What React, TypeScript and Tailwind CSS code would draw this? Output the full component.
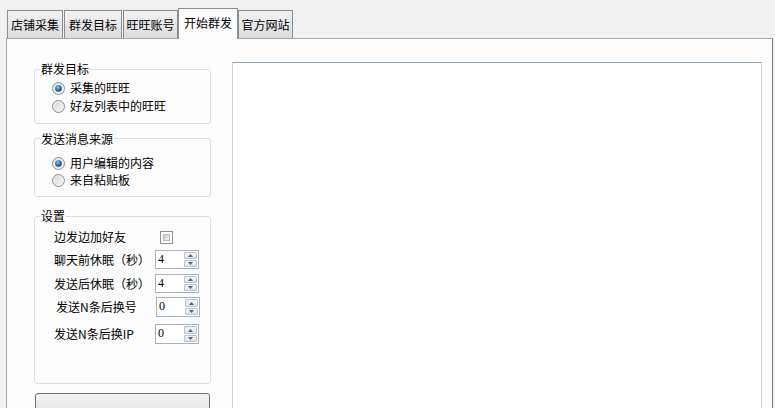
import React from "react";

const FONT = { fontFamily: '"Noto Sans CJK SC", "Noto Sans", sans-serif' };

function Radio({ checked }: { checked?: boolean }) {
  return (
    <svg width="13" height="13" viewBox="0 0 13 13" className="shrink-0">
      <defs>
        <linearGradient id="rbg" x1="0" y1="0" x2="1" y2="1">
          <stop offset="0" stopColor="#d2d2d2" />
          <stop offset="1" stopColor="#fafafa" />
        </linearGradient>
        <radialGradient id="rdot" cx="0.4" cy="0.35" r="0.7">
          <stop offset="0" stopColor="#8fd0f7" />
          <stop offset="0.55" stopColor="#2a6fa8" />
          <stop offset="1" stopColor="#163f69" />
        </radialGradient>
      </defs>
      <circle cx="6.5" cy="6.5" r="6" fill="url(#rbg)" stroke="#8e8f8f" strokeWidth="1" />
      <circle cx="6.5" cy="6.5" r="4.5" fill="none" stroke="#f4f4f4" strokeWidth="0.8" />
      {checked && <circle cx="6.5" cy="6.5" r="3.3" fill="url(#rdot)" />}
    </svg>
  );
}

function CheckBox() {
  return (
    <div className="w-[13px] h-[13px] border border-[#8e8f8f] bg-white p-[2px]">
      <div className="w-full h-full bg-gradient-to-br from-[#cbcbcb] to-[#f3f3f3] border border-[#b9b9b9]" />
    </div>
  );
}

function Spin({ value }: { value: string }) {
  return (
    <div className="flex w-[44px] h-full border border-[#a9b0b8] bg-white">
      <span
        className="flex-1 pl-[2px] text-[12px] leading-[16px] text-black"
        style={{ fontFamily: '"Liberation Serif", serif' }}
      >
        {value}
      </span>
      <div className="flex flex-col w-[13px] my-[1px] mr-[1px] gap-[1px]">
        <div className="flex-1 flex items-center justify-center bg-gradient-to-b from-[#f3f6f9] to-[#dfe6ec] border border-[#b7c2cc] rounded-[1px]">
          <svg width="5" height="3" viewBox="0 0 5 3">
            <path d="M0 3 L2.5 0 L5 3 Z" fill="#4d6185" />
          </svg>
        </div>
        <div className="flex-1 flex items-center justify-center bg-gradient-to-b from-[#f3f6f9] to-[#dfe6ec] border border-[#b7c2cc] rounded-[1px]">
          <svg width="5" height="3" viewBox="0 0 5 3">
            <path d="M0 0 L2.5 3 L5 0 Z" fill="#4d6185" />
          </svg>
        </div>
      </div>
    </div>
  );
}

function Tab({ label, w, selected, ml }: { label: string; w: string; selected?: boolean; ml?: string }) {
  if (selected) {
    return (
      <div
        className={`relative z-10 -mb-[1px] h-[31px] ${w} ${ml ?? ""} flex items-center justify-center pb-[3px] border border-b-0 border-[#898c95] bg-[#fcfcfc] text-[12px] text-black`}
      >
        {label}
      </div>
    );
  }
  return (
    <div
      className={`h-[28px] ${w} ${ml ?? ""} flex items-center justify-center border border-b-0 border-[#898c95] bg-gradient-to-b from-[#f2f2f2] to-[#dcdcdc] text-[12px] text-black`}
    >
      {label}
    </div>
  );
}

export default function App() {
  return (
    <div className="w-[775px] h-[408px] overflow-hidden bg-[#f0f0f0] text-black" style={FONT}>
      <div className="flex items-end h-[38px] pl-[7px]">
        <Tab label="店铺采集" w="w-[56px]" />
        <Tab label="群发目标" w="w-[58px]" ml="ml-[1px]" />
        <Tab label="旺旺账号" w="w-[55px]" ml="ml-[1px]" />
        <Tab label="开始群发" w="w-[60px]" selected />
        <Tab label="官方网站" w="w-[55px]" />
      </div>
      <div className="ml-[6px] w-[767px] h-[380px] border border-[#a7a7a7] border-r-[#7f7f7f] bg-[#fcfcfc] flex pl-[27px] pt-[23px]">
        <div className="w-[177px] flex flex-col">
          <fieldset className="h-[62px] border border-[#d5dfe5] rounded-[3px] pt-[3px]">
            <legend className="ml-[5px] px-[1px] text-[12px] leading-[14px]">群发目标</legend>
            <div className="pl-[17px]">
              <div className="flex items-center h-[18px] gap-[5px] text-[12px]">
                <Radio checked />
                <span>采集的旺旺</span>
              </div>
              <div className="flex items-center h-[18px] gap-[5px] text-[12px]">
                <Radio />
                <span>好友列表中的旺旺</span>
              </div>
            </div>
          </fieldset>
          <fieldset className="mt-[8px] h-[66px] border border-[#d5dfe5] rounded-[3px] pt-[9px]">
            <legend className="ml-[5px] px-[1px] text-[12px] leading-[14px]">发送消息来源</legend>
            <div className="pl-[17px]">
              <div className="flex items-center h-[17px] gap-[5px] text-[12px]">
                <Radio checked />
                <span>用户编辑的内容</span>
              </div>
              <div className="flex items-center h-[17px] gap-[5px] text-[12px]">
                <Radio />
                <span>来自粘贴板</span>
              </div>
            </div>
          </fieldset>
          <fieldset className="mt-[12px] h-[176px] border border-[#d5dfe5] rounded-[3px] pt-[6px] text-[12px]">
            <legend className="ml-[5px] px-[1px] text-[12px] leading-[14px]">设置</legend>
            <div className="flex items-center h-[16px] pl-[19px]">
              <span className="w-[106px]">边发边加好友</span>
              <CheckBox />
            </div>
            <div className="flex items-center h-[19px] mt-[5px] pl-[19px]">
              <span className="w-[101px]">聊天前休眠（秒）</span>
              <Spin value="4" />
            </div>
            <div className="flex items-center h-[19px] mt-[5px] pl-[19px]">
              <span className="w-[101px]">发送后休眠（秒）</span>
              <Spin value="4" />
            </div>
            <div className="flex items-center h-[20px] mt-[4px] pl-[21px]">
              <span className="w-[100px]">发送N条后换号</span>
              <Spin value="0" />
            </div>
            <div className="flex items-center h-[20px] mt-[7px] pl-[19px]">
              <span className="w-[101px]">发送N条后换IP</span>
              <Spin value="0" />
            </div>
          </fieldset>
          <button className="mt-[9px] ml-[1px] w-[175px] h-[24px] border border-[#707070] rounded-[3px] bg-gradient-to-b from-[#f2f2f2] to-[#e5e5e5]" />
        </div>
        <div className="ml-[21px] w-[530px] h-[360px] border border-[#c5d5de] border-t-[#8fa9b8] bg-white" />
      </div>
    </div>
  );
}
